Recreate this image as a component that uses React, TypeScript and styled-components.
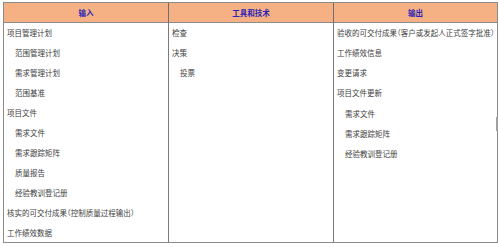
import React from "react";
import styled, { createGlobalStyle } from "styled-components";

type Item = { text: string; sub?: boolean };

const columns: { title: string; items: Item[] }[] = [
  {
    title: "输入",
    items: [
      { text: "项目管理计划" },
      { text: "范围管理计划", sub: true },
      { text: "需求管理计划", sub: true },
      { text: "范围基准", sub: true },
      { text: "项目文件" },
      { text: "需求文件", sub: true },
      { text: "需求跟踪矩阵", sub: true },
      { text: "质量报告", sub: true },
      { text: "经验教训登记册", sub: true },
      { text: "核实的可交付成果（控制质量过程输出）" },
      { text: "工作绩效数据" },
    ],
  },
  {
    title: "工具和技术",
    items: [{ text: "检查" }, { text: "决策" }, { text: "投票", sub: true }],
  },
  {
    title: "输出",
    items: [
      { text: "验收的可交付成果（客户或发起人正式签字批准）" },
      { text: "工作绩效信息" },
      { text: "变更请求" },
      { text: "项目文件更新" },
      { text: "需求文件", sub: true },
      { text: "需求跟踪矩阵", sub: true },
      { text: "经验教训登记册", sub: true },
    ],
  },
];

const GlobalStyle = createGlobalStyle`
  body {
    margin: 0;
    background: #fff;
    font-family: "Noto Sans CJK SC", "Noto Sans", sans-serif;
  }
`;

const Page = styled.div`
  position: relative;
  width: 499px;
  height: 247px;
  padding: 2px 0 0 3px;
  box-sizing: border-box;
`;

const Table = styled.div`
  display: grid;
  grid-template-columns: 164px 165px 164px;
  grid-template-rows: 20px 219px;
  width: 495px;
  border: 1px solid #8a8a8a;
  box-sizing: border-box;
`;

const HeadCell = styled.div<{ $first?: boolean }>`
  background: #f5b183;
  border-bottom: 1px solid #8c8c8c;
  border-left: ${(p) => (p.$first ? "none" : "1px solid #6e6e6e")};
  color: #2a23b8;
  font-size: 7.5px;
  font-weight: bold;
  display: flex;
  align-items: center;
  justify-content: center;
`;

const BodyCell = styled.div<{ $first?: boolean }>`
  border-left: ${(p) => (p.$first ? "none" : "1px solid #7a7a7a")};
  padding: 0 0 0 3px;
  display: flex;
  flex-direction: column;
`;

const Line = styled.div<{ $sub?: boolean }>`
  height: 20.15px;
  line-height: 20px;
  font-size: 7.5px;
  font-feature-settings: "halt";
  color: #404040;
  white-space: nowrap;
  padding-left: ${(p) => (p.$sub ? "8px" : "0")};
`;

const ScrollMark = styled.div`
  position: absolute;
  right: 1px;
  top: 117px;
  width: 2px;
  height: 14px;
  background: #a0a0a0;
`;

const App: React.FC = () => {
  return (
    <>
      <GlobalStyle />
      <Page>
        <Table>
          {columns.map((c, i) => (
            <HeadCell key={c.title} $first={i === 0}>
              {c.title}
            </HeadCell>
          ))}
          {columns.map((c, i) => (
            <BodyCell key={c.title} $first={i === 0}>
              {c.items.map((it, j) => (
                <Line key={j} $sub={it.sub}>
                  {it.text}
                </Line>
              ))}
            </BodyCell>
          ))}
        </Table>
        <ScrollMark />
      </Page>
    </>
  );
};

export default App;
